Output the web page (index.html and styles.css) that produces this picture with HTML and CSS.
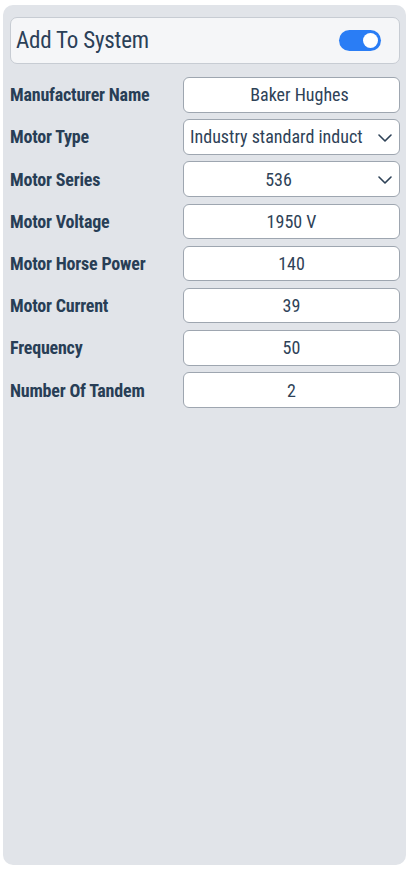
FILE: index.html
```html
<!DOCTYPE html>
<html lang="en">
<head>
<meta charset="utf-8">
<title>Motor</title>
<link rel="stylesheet" href="styles.css">
</head>
<body>
<div class="panel">
  <div class="header">
    <span class="header-title">Add To System</span>
    <span class="toggle"><span class="knob"></span></span>
  </div>
  <div class="form">
    <div class="label">Manufacturer Name</div>
    <div class="field field-shift">Baker Hughes</div>

    <div class="label">Motor Type</div>
    <div class="field field-select field-left"><span class="field-text">Industry standard induct</span><svg class="chev" viewBox="0 0 14 8" width="14" height="8"><path d="M1 1 L7 7 L13 1" fill="none" stroke="#2e4257" stroke-width="1.6" stroke-linecap="round" stroke-linejoin="round"/></svg></div>

    <div class="label">Motor Series</div>
    <div class="field field-select"><span class="field-text">536</span><svg class="chev" viewBox="0 0 14 8" width="14" height="8"><path d="M1 1 L7 7 L13 1" fill="none" stroke="#2e4257" stroke-width="1.6" stroke-linecap="round" stroke-linejoin="round"/></svg></div>

    <div class="label">Motor Voltage</div>
    <div class="field">1950 V</div>

    <div class="label">Motor Horse Power</div>
    <div class="field">140</div>

    <div class="label">Motor Current</div>
    <div class="field">39</div>

    <div class="label">Frequency</div>
    <div class="field">50</div>

    <div class="label">Number Of Tandem</div>
    <div class="field">2</div>
  </div>
</div>
</body>
</html>
```
FILE: styles.css
```css
html, body {
  margin: 0;
  padding: 0;
  background: #ffffff;
}
body {
  font-family: "Roboto Condensed", "Liberation Sans Narrow", Roboto, sans-serif;
  color: #2b4057;
}
.panel {
  box-sizing: border-box;
  width: 403px;
  height: 860px;
  margin: 5px 0 0 3px;
  background: #e1e4e9;
  border-radius: 10px;
  padding: 12px 6px 0 7px;
}
.header {
  box-sizing: border-box;
  height: 47px;
  background: #f5f6f8;
  border: 1px solid #c7ccd3;
  border-radius: 7px;
  display: flex;
  align-items: center;
  justify-content: space-between;
  padding: 0 18px 0 5px;
}
.header-title {
  font-size: 23px;
  color: #2b4057;
  letter-spacing: -0.2px;
}
.toggle {
  width: 42px;
  height: 21px;
  border-radius: 11px;
  background: #2a7df5;
  display: flex;
  align-items: center;
  justify-content: flex-end;
  padding-right: 3px;
  box-sizing: border-box;
}
.knob {
  width: 15px;
  height: 15px;
  border-radius: 50%;
  background: #ffffff;
}
.form {
  margin-top: 13px;
  display: grid;
  grid-template-columns: 173px 217px;
  row-gap: 6.7px;
  align-items: center;
}
.label {
  font-weight: 700;
  font-size: 18px;
  letter-spacing: -0.2px;
  color: #283e56;
  white-space: nowrap;
}
.field {
  box-sizing: border-box;
  height: 35.5px;
  background: #ffffff;
  border: 1px solid #9ea6b0;
  border-radius: 6px;
  display: flex;
  align-items: center;
  justify-content: center;
  font-size: 18px;
  color: #2e4257;
  white-space: nowrap;
  overflow: hidden;
}
.field-shift {
  padding-left: 16px;
}
.field-select {
  padding-right: 26px;
  position: relative;
}
.field-left {
  justify-content: flex-start;
  padding-left: 6px;
}
.field-text {
  white-space: nowrap;
}
.chev {
  position: absolute;
  right: 7px;
  top: 14px;
}
```
